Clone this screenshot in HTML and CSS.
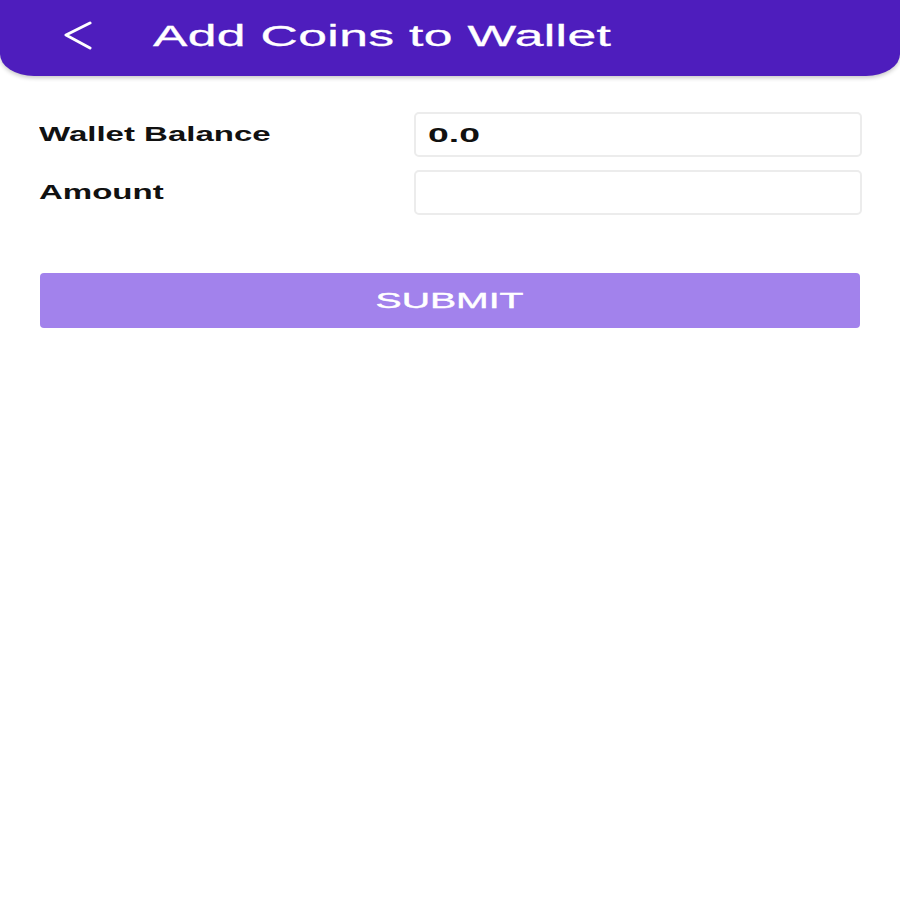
FILE: index.html
```html
<!DOCTYPE html>
<html lang="en">
<head>
  <meta charset="UTF-8">
  <meta name="viewport" content="width=device-width, initial-scale=1">
  <title>Add Coins to Wallet</title>
  <link rel="stylesheet" href="styles.css">
</head>
<body>

  <header class="app-bar">
    <button class="back-btn" aria-label="Back">
      <svg width="30" height="30" viewBox="0 0 30 30">
        <polyline points="26,2 2,14 26,27" fill="none" stroke="#fff" stroke-width="3" stroke-linecap="round" stroke-linejoin="round"/>
      </svg>
    </button>
    <h1 class="title"><span class="wide">Add Coins to Wallet</span></h1>
  </header>

  <main class="form">
    <div class="form-grid">
      <label class="label"><span class="wide">Wallet Balance</span></label>
      <div class="field"><span class="wide">0.0</span></div>

      <label class="label"><span class="wide">Amount</span></label>
      <div class="field"></div>
    </div>

    <button class="submit-btn"><span class="wide">SUBMIT</span></button>
  </main>

</body>
</html>
```

FILE: styles.css
```css
* {
  box-sizing: border-box;
}

body {
  font-family: 'Liberation Sans', Arial, sans-serif;
  background: #fff;
  margin: 0;
  padding: 0;
  height: 100vh;
}

/* the screen is stretched sideways, so text is too */
.wide {
  display: inline-block;
  transform: scaleX(1.78);
  transform-origin: left center;
  white-space: nowrap;
}

/* App bar */
.app-bar {
  height: 76px;
  background: #4e1dbd;
  border-radius: 0 0 34px 34px / 0 0 22px 22px;
  box-shadow: 0 2px 4px rgba(0, 0, 0, 0.22);
  display: flex;
  align-items: center;
  padding: 0 0 4px 64px;
}

.back-btn {
  background: none;
  border: none;
  padding: 0;
  width: 30px;
  height: 30px;
  margin-right: 59px;
  cursor: pointer;
}

.title {
  margin: 0;
  color: #fff;
  font-size: 29px;
  font-weight: normal;
  letter-spacing: 0.2px;
  -webkit-text-stroke: 0.3px #fff;
}

/* Form */
.form {
  padding: 36px 38px 0 39px;
}

.form-grid {
  display: grid;
  grid-template-columns: 375px 1fr;
  grid-auto-rows: 45px;
  row-gap: 13px;
  align-items: center;
}

.label {
  font-size: 20px;
  font-weight: bold;
  color: #111;
}

.label .wide {
  transform: scaleX(1.65);
}

.field {
  height: 45px;
  border: 2px solid #ececec;
  border-radius: 5px;
  padding: 0 12px;
  display: flex;
  align-items: center;
  font-size: 21px;
  font-weight: bold;
  color: #111;
}

.submit-btn {
  display: block;
  width: calc(100% - 3px);
  height: 55px;
  margin: 58px 2px 0 1px;
  border: none;
  border-radius: 4px;
  background: #a282ec;
  color: #fff;
  font-family: inherit;
  font-size: 22px;
  -webkit-text-stroke: 0.4px #fff;
  cursor: pointer;
  text-align: center;
}

.submit-btn .wide {
  transform-origin: center center;
}
```
